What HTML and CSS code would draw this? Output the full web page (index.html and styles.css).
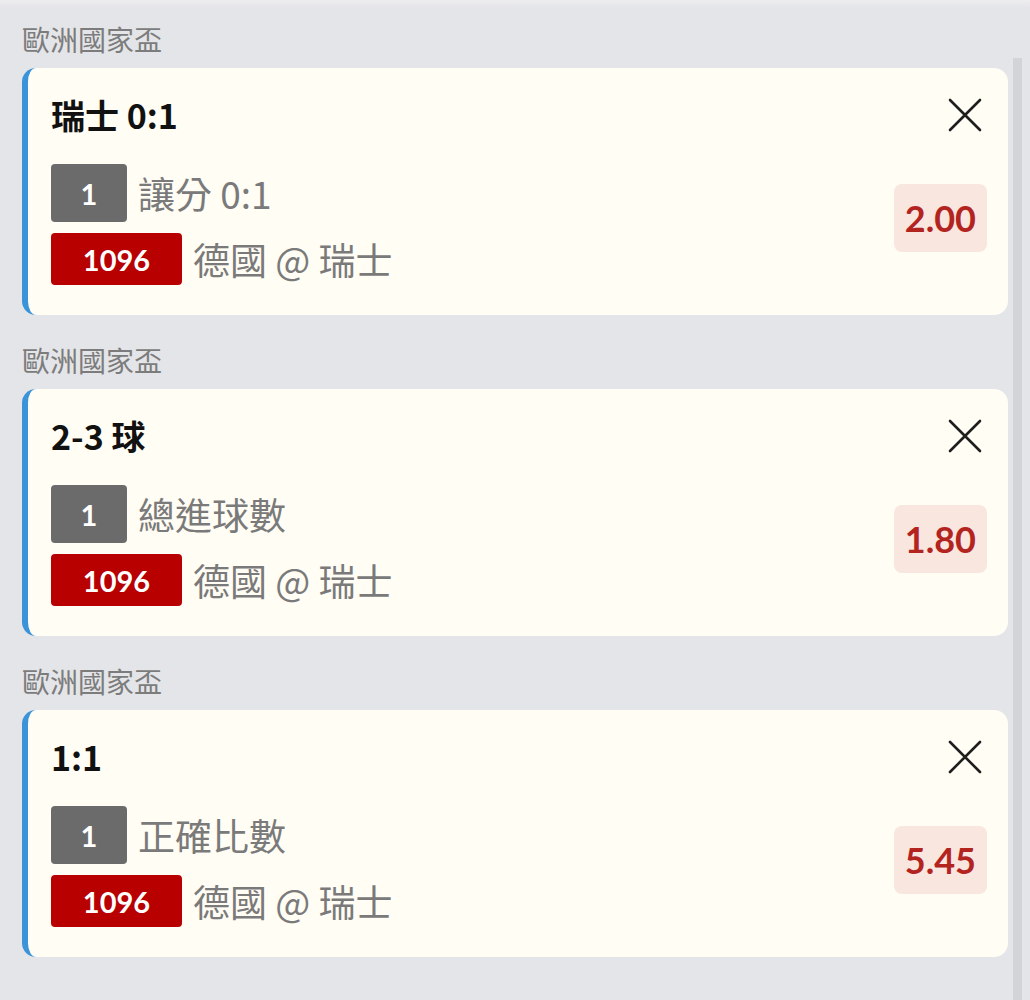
FILE: index.html
```html
<html>
<head>
	<title>Bet Slip</title>
	<meta charset="utf-8">
	<link rel="stylesheet" href="styles.css">
</head>
<body>
	<div class="topShade"></div>
	<div class="page">
		<div class="slipList">
			<div class="slipGroup">
				<div class="leagueName">歐洲國家盃</div>
				<div class="betCard">
					<div class="betHead">
						<div class="betTitle">瑞士 0:1</div>
						<button class="btnRemove" type="button">
							<svg width="34" height="34" viewBox="0 0 34 34"><path d="M2 2 L32 32 M32 2 L2 32" stroke="#1e1e1e" stroke-width="2.6" stroke-linecap="round" fill="none"/></svg>
						</button>
					</div>
					<div class="betBody">
						<div class="betRows">
							<div class="betRow rowMarket">
								<span class="tagCount">1</span>
								<span class="rowText">讓分 0:1</span>
							</div>
							<div class="betRow rowMatch">
								<span class="tagMatch">1096</span>
								<span class="rowText">德國 @ 瑞士</span>
							</div>
						</div>
						<div class="betOdds">2.00</div>
					</div>
				</div>
			</div>
			<div class="slipGroup">
				<div class="leagueName">歐洲國家盃</div>
				<div class="betCard">
					<div class="betHead">
						<div class="betTitle">2-3 球</div>
						<button class="btnRemove" type="button">
							<svg width="34" height="34" viewBox="0 0 34 34"><path d="M2 2 L32 32 M32 2 L2 32" stroke="#1e1e1e" stroke-width="2.6" stroke-linecap="round" fill="none"/></svg>
						</button>
					</div>
					<div class="betBody">
						<div class="betRows">
							<div class="betRow rowMarket">
								<span class="tagCount">1</span>
								<span class="rowText">總進球數</span>
							</div>
							<div class="betRow rowMatch">
								<span class="tagMatch">1096</span>
								<span class="rowText">德國 @ 瑞士</span>
							</div>
						</div>
						<div class="betOdds">1.80</div>
					</div>
				</div>
			</div>
			<div class="slipGroup">
				<div class="leagueName">歐洲國家盃</div>
				<div class="betCard">
					<div class="betHead">
						<div class="betTitle">1:1</div>
						<button class="btnRemove" type="button">
							<svg width="34" height="34" viewBox="0 0 34 34"><path d="M2 2 L32 32 M32 2 L2 32" stroke="#1e1e1e" stroke-width="2.6" stroke-linecap="round" fill="none"/></svg>
						</button>
					</div>
					<div class="betBody">
						<div class="betRows">
							<div class="betRow rowMarket">
								<span class="tagCount">1</span>
								<span class="rowText">正確比數</span>
							</div>
							<div class="betRow rowMatch">
								<span class="tagMatch">1096</span>
								<span class="rowText">德國 @ 瑞士</span>
							</div>
						</div>
						<div class="betOdds">5.45</div>
					</div>
				</div>
			</div>
		</div>
		<div class="scrollThumb"></div>
	</div>
</body>
</html>
```

FILE: styles.css
```css
html, body {
	margin: 0;
	padding: 0;
	background-color: #e4e5e8;
	font-family: "Noto Sans CJK TC", "Lato", sans-serif;
}
.topShade {
	position: fixed;
	top: 0;
	left: 0;
	right: 0;
	height: 8px;
	background: linear-gradient(#ededef, #e4e5e8);
}
.page {
	display: flex;
	min-height: 100vh;
}
.slipList {
	flex: 1;
	padding: 22px 0 0 22px;
}
.scrollThumb {
	width: 9px;
	margin: 58px 8px 0 5px;
	background-color: #d3d4d7;
}
.slipGroup {
	margin-bottom: 28px;
}
.leagueName {
	font-size: 28px;
	line-height: 34px;
	color: #7c7c7c;
	margin-bottom: 12px;
}
.betCard {
	box-sizing: border-box;
	height: 247px;
	background-color: #fffdf4;
	border-left: 6px solid #3b93d8;
	border-radius: 14px;
	padding: 27px 21px 30px 23px;
}
.betHead {
	display: flex;
	align-items: center;
	justify-content: space-between;
	height: 40px;
}
.betTitle {
	font-size: 34px;
	font-weight: bold;
	color: #111;
	line-height: 40px;
}
.btnRemove {
	width: 34px;
	height: 34px;
	padding: 0;
	margin-right: 5px;
	border: 0 none;
	background: none;
	cursor: pointer;
}
.btnRemove svg {
	display: block;
}
.betBody {
	display: flex;
	margin-top: 29px;
}
.betRows {
	flex: 1;
}
.betRow {
	display: flex;
	align-items: center;
}
.rowMarket {
	height: 58px;
}
.rowMatch {
	height: 52px;
	margin-top: 11px;
}
.tagCount, .tagMatch {
	box-sizing: border-box;
	display: flex;
	align-items: center;
	justify-content: center;
	height: 100%;
	border-radius: 4px;
	color: white;
	font-family: "Lato", sans-serif;
	font-weight: bold;
}
.tagCount {
	width: 76px;
	font-size: 29px;
	background-color: #6b6b6b;
}
.tagMatch {
	width: 131px;
	font-size: 29px;
	background-color: #b80000;
}
.rowText {
	margin-left: 11px;
	font-size: 37px;
	color: #7a7a7a;
	line-height: 1;
}
.betOdds {
	align-self: flex-start;
	margin-top: 20px;
	height: 68px;
	line-height: 68px;
	padding: 0 11px;
	border-radius: 8px;
	background-color: #f8e6df;
	color: #b3241f;
	font-family: "Lato", sans-serif;
	font-weight: bold;
	font-size: 36px;
}
```
